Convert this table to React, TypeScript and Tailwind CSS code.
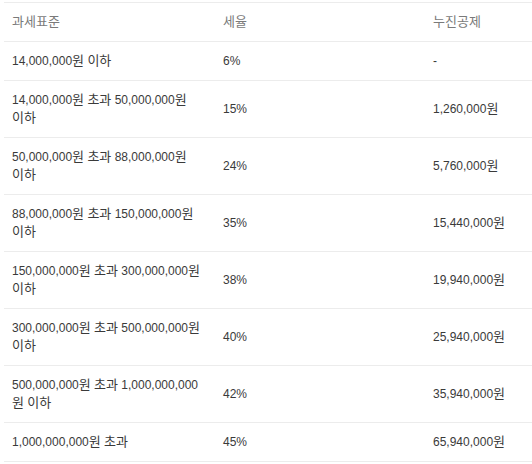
const ROWS = [
  { base: '14,000,000원 이하', rate: '6%', deduction: '-' },
  { base: '14,000,000원 초과 50,000,000원 이하', rate: '15%', deduction: '1,260,000원' },
  { base: '50,000,000원 초과 88,000,000원 이하', rate: '24%', deduction: '5,760,000원' },
  { base: '88,000,000원 초과 150,000,000원 이하', rate: '35%', deduction: '15,440,000원' },
  { base: '150,000,000원 초과 300,000,000원 이하', rate: '38%', deduction: '19,940,000원' },
  { base: '300,000,000원 초과 500,000,000원 이하', rate: '40%', deduction: '25,940,000원' },
  // zero-width space lets this one wrap before 원 like the source table
  { base: '500,000,000원 초과 1,000,000,000\u200B원 이하', rate: '42%', deduction: '35,940,000원' },
  { base: '1,000,000,000원 초과', rate: '45%', deduction: '65,940,000원' },
];

// hangul renders a size up so it sits with the narrower latin digits
const Mixed = ({ text }: { text: string }) => (
  <>
    {text.split(/([\uAC00-\uD7A3]+)/).map((part, i) =>
      /[\uAC00-\uD7A3]/.test(part) ? (
        <span key={i} className="text-[13px]">{part}</span>
      ) : (
        part
      )
    )}
  </>
);

export default function App() {
  return (
    <div className="bg-white w-[532px] h-[464px] pl-[4px] pt-[2px] font-['Liberation_Sans','Noto_Sans_CJK_KR',sans-serif] text-[12px] leading-[18px]">
      <table className="w-[528px] table-fixed border-collapse border-t border-[#ececec]">
        <colgroup>
          <col className="w-[211px]" />
          <col className="w-[210px]" />
          <col />
        </colgroup>
        <thead>
          <tr className="border-b border-[#ececec] text-[#7a7a7a]">
            <th className="px-2 py-[10px] text-left font-normal text-[13px]">과세표준</th>
            <th className="px-2 py-[10px] text-left font-normal text-[13px]">세율</th>
            <th className="px-2 py-[10px] text-left font-normal text-[13px]">누진공제</th>
          </tr>
        </thead>
        <tbody className="text-[#3a3a3a]">
          {ROWS.map((row) => (
            <tr key={row.base} className="border-b border-[#ececec]">
              <td className="px-2 py-[10px] align-middle break-keep"><Mixed text={row.base} /></td>
              <td className="px-2 py-[10px] align-middle">{row.rate}</td>
              <td className="px-2 py-[10px] align-middle"><Mixed text={row.deduction} /></td>
            </tr>
          ))}
        </tbody>
      </table>
    </div>
  );
}
